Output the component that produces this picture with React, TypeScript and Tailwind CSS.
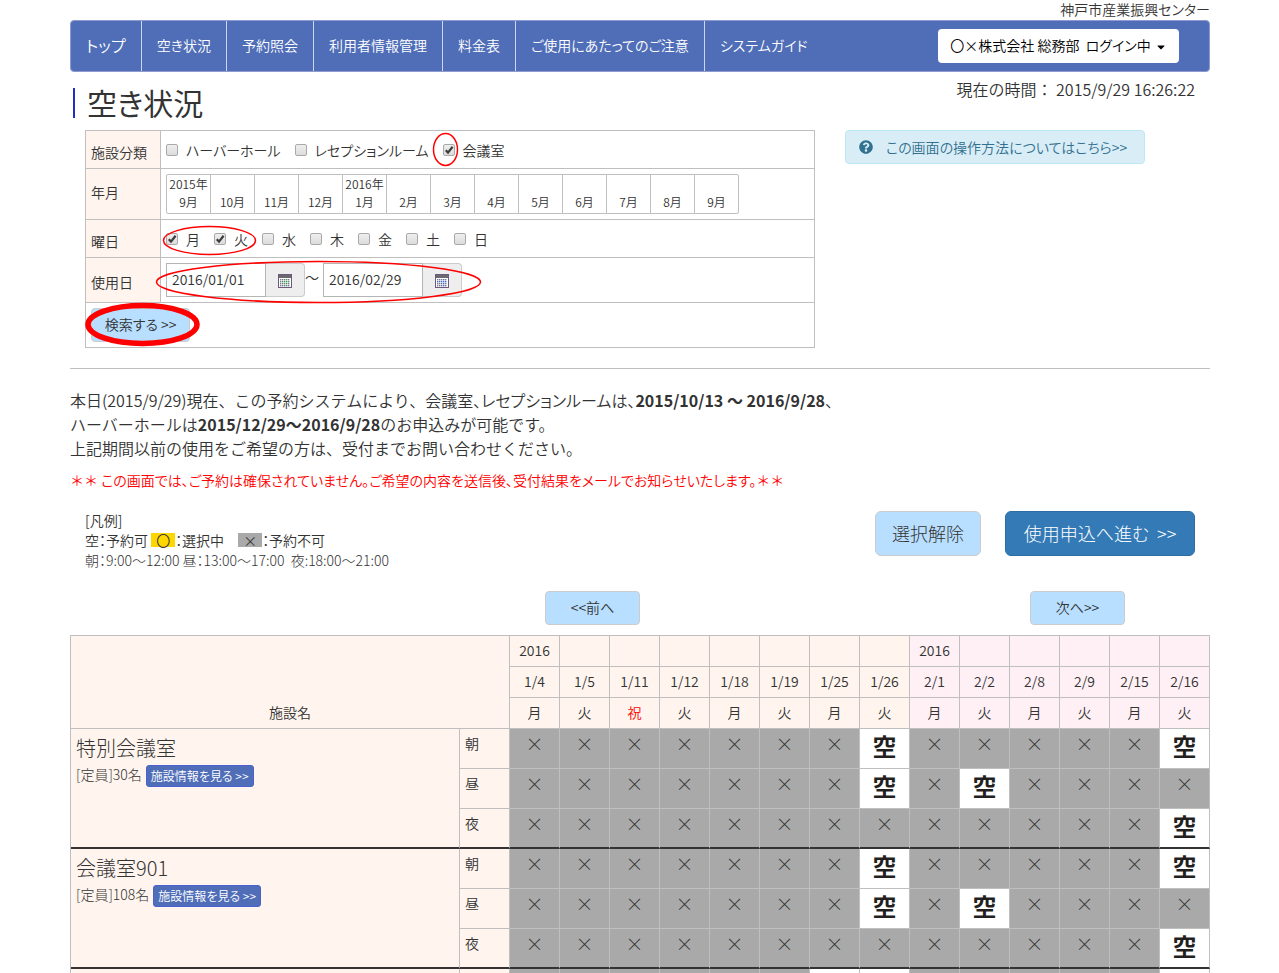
import React from "react";
import { FaQuestionCircle, FaCaretDown } from "react-icons/fa";

const navItems = [
  "空き状況",
  "予約照会",
  "利用者情報管理",
  "料金表",
  "ご使用にあたってのご注意",
  "システムガイド",
];

const facilities = [
  { name: "ハーバーホール", on: false },
  { name: "レセプションルーム", on: false },
  { name: "会議室", on: true },
];

const weekdays = [
  { name: "月", on: true },
  { name: "火", on: true },
  { name: "水", on: false },
  { name: "木", on: false },
  { name: "金", on: false },
  { name: "土", on: false },
  { name: "日", on: false },
];

const months = [
  { year: "2015年", month: "9月" },
  { year: "", month: "10月" },
  { year: "", month: "11月" },
  { year: "", month: "12月" },
  { year: "2016年", month: "1月" },
  { year: "", month: "2月" },
  { year: "", month: "3月" },
  { year: "", month: "4月" },
  { year: "", month: "5月" },
  { year: "", month: "6月" },
  { year: "", month: "7月" },
  { year: "", month: "8月" },
  { year: "", month: "9月" },
];

const days = [
  { year: "2016", date: "1/4", day: "月" },
  { year: "", date: "1/5", day: "火" },
  { year: "", date: "1/11", day: "祝" },
  { year: "", date: "1/12", day: "火" },
  { year: "", date: "1/18", day: "月" },
  { year: "", date: "1/19", day: "火" },
  { year: "", date: "1/25", day: "月" },
  { year: "", date: "1/26", day: "火" },
  { year: "2016", date: "2/1", day: "月" },
  { year: "", date: "2/2", day: "火" },
  { year: "", date: "2/8", day: "月" },
  { year: "", date: "2/9", day: "火" },
  { year: "", date: "2/15", day: "月" },
  { year: "", date: "2/16", day: "火" },
];

const rooms = [
  { name: "特別会議室", capacity: "30名", open: [[7, 13], [7, 9], [13]] },
  { name: "会議室901", capacity: "108名", open: [[7, 13], [7, 9], [13]] },
];

const slots = ["朝", "昼", "夜"];

const nextRoomOpen = [6, 7, 13];

function headTint(date: string) {
  return date.startsWith("2/") ? "bg-[#fff0f5]" : "bg-[#fff5ee]";
}

function Check({ name, on }: { name: string; on: boolean }) {
  return (
    <label className="flex items-center gap-2">
      <span className="relative flex">
        <input
          type="checkbox"
          defaultChecked={on}
          className="peer size-3 appearance-none rounded-xs border border-[#a9a9a9] bg-linear-to-b from-[#eeeeee] to-[#dcdcdc]"
        />
        <svg
          viewBox="0 0 12 12"
          className="pointer-events-none absolute inset-0 hidden size-3 peer-checked:block"
        >
          <path d="M2.8 6.2 5 8.6 9.6 2.8" fill="none" stroke="#3c3c3c" strokeWidth="2.2" />
        </svg>
      </span>
      {name}
    </label>
  );
}

function CalendarIcon({ tint }: { tint: string }) {
  return (
    <svg viewBox="0 0 14 14" className="size-[14px]">
      <rect x="0.5" y="0.5" width="13" height="13" fill="#fff" stroke="#6b5a7b" />
      <rect x="1" y="1" width="12" height="3" fill="#6a6a6e" />
      {[5, 7, 9, 11].map((y) =>
        [2, 4, 6, 8, 10].map((x) => (
          <rect
            key={`${x}-${y}`}
            x={x}
            y={y}
            width="1.4"
            height="1.4"
            fill={y === 7 || x === 8 ? tint : "#77778a"}
          />
        )),
      )}
    </svg>
  );
}

function DateField({ value, label, tint }: { value: string; label: string; tint: string }) {
  return (
    <div className="flex h-[34px]">
      <input
        type="text"
        defaultValue={value}
        aria-label={label}
        className="w-[100px] border border-[#b5b5b5] bg-white px-[5px] pb-[2px] text-sm text-[#333]"
      />
      <button
        type="button"
        aria-label={`${label}カレンダー`}
        className="flex w-[39px] items-center justify-center rounded-r border border-l-0 border-[#cccccc] bg-[#eeeeee] pt-[2px]"
      >
        <CalendarIcon tint={tint} />
      </button>
    </div>
  );
}

function SearchRow({
  label,
  height,
  labelPad,
  children,
}: {
  label: string;
  height: string;
  labelPad: string;
  children: React.ReactNode;
}) {
  return (
    <tr className={height}>
      <th
        scope="row"
        className={`w-[75px] border-r border-b border-[#bfbfbf] bg-[#fff5ee] px-[5px] text-left font-[350] ${labelPad}`}
      >
        {label}
      </th>
      <td className="border-r border-b border-[#bfbfbf] px-[5px]">{children}</td>
    </tr>
  );
}

function SearchForm() {
  return (
    <form className="relative">
      <table className="w-full border-separate border-spacing-0 border-t border-l border-[#bfbfbf]">
        <tbody>
          <SearchRow label="施設分類" height="h-[38px]" labelPad="pt-1">
            <div className="flex gap-[14px]">
              {facilities.map((f) => (
                <Check key={f.name} name={f.name} on={f.on} />
              ))}
            </div>
          </SearchRow>
          <SearchRow label="年月" height="h-[51px]" labelPad="pb-1">
            <div className="flex">
              {months.map((m, i) => (
                <button
                  type="button"
                  key={i}
                  className="-mr-px flex h-10 w-[45px] flex-col items-center justify-end border border-[#bfbfbf] pb-[2px] text-xs leading-[18px] first:rounded-l-xs last:rounded-r-xs"
                >
                  <span>{m.year}</span>
                  <span>{m.month}</span>
                </button>
              ))}
            </div>
          </SearchRow>
          <SearchRow label="曜日" height="h-[38px]" labelPad="pt-1">
            <div className="flex gap-[14px]">
              {weekdays.map((d) => (
                <Check key={d.name} name={d.name} on={d.on} />
              ))}
            </div>
          </SearchRow>
          <SearchRow label="使用日" height="h-[45px]" labelPad="pt-1">
            <div className="flex">
              <DateField value="2016/01/01" label="開始日" tint="#3f9a5a" />
              <span className="w-[18px] pt-1">～</span>
              <DateField value="2016/02/29" label="終了日" tint="#4a6bd0" />
            </div>
          </SearchRow>
          <tr className="h-[45px]">
            <td colSpan={2} className="border-r border-b border-[#bfbfbf] px-[5px]">
              <button
                type="submit"
                className="flex h-[34px] w-[99px] items-center justify-center rounded border border-[#cccccc] bg-[#b8dfff] pb-[2px]"
              >
                検索する &gt;&gt;
              </button>
            </td>
          </tr>
        </tbody>
      </table>
      <svg
        viewBox="0 0 420 220"
        className="pointer-events-none absolute top-0 left-0 h-[220px] w-[420px] overflow-visible"
        fill="none"
        stroke="#f00"
      >
        <ellipse cx="360.5" cy="19.5" rx="12" ry="16" strokeWidth="1.5" />
        <ellipse cx="124.5" cy="110.5" rx="46" ry="14" strokeWidth="1.5" />
        <ellipse cx="233.5" cy="152" rx="162" ry="20.5" strokeWidth="1.5" />
        <ellipse cx="57.5" cy="194.5" rx="54.5" ry="19" strokeWidth="5.5" />
      </svg>
    </form>
  );
}

function AvailabilityTable() {
  return (
    <table className="w-full table-fixed border-separate border-spacing-0 border-t border-l border-[#bfbfbf]">
      <colgroup>
        <col />
        <col className="w-[50px]" />
        {days.map((d) => (
          <col key={d.date} className="w-[50px]" />
        ))}
      </colgroup>
      <thead>
        <tr className="h-[31px]">
          <th
            rowSpan={3}
            colSpan={2}
            className="border-r border-b border-[#bfbfbf] bg-[#fff5ee] pb-[6px] align-bottom font-[350]"
          >
            施設名
          </th>
          {days.map((d) => (
            <th
              key={d.date}
              className={`border-r border-b border-[#bfbfbf] pb-[2px] font-[350] ${headTint(d.date)}`}
            >
              {d.year}
            </th>
          ))}
        </tr>
        <tr className="h-[31px]">
          {days.map((d) => (
            <th
              key={d.date}
              className={`border-r border-b border-[#bfbfbf] pb-[2px] font-[350] ${headTint(d.date)}`}
            >
              {d.date}
            </th>
          ))}
        </tr>
        <tr className="h-[31px]">
          {days.map((d) => (
            <th
              key={d.date}
              className={`border-r border-b border-[#bfbfbf] pb-[2px] font-[350] ${headTint(d.date)} ${
                d.day === "祝" ? "text-[#f00]" : ""
              }`}
            >
              {d.day}
            </th>
          ))}
        </tr>
      </thead>
      <tbody>
        {rooms.map((room) =>
          slots.map((slot, s) => {
            const edge = s === 2 ? "border-b-2 border-b-[#333]" : "border-b border-b-[#bfbfbf]";
            return (
              <tr key={room.name + slot} className="h-10">
                {s === 0 && (
                  <th
                    scope="rowgroup"
                    rowSpan={3}
                    className="border-r border-b-2 border-r-[#bfbfbf] border-b-[#333] bg-[#fff5ee] px-[5px] pt-[7px] text-left align-top font-[350]"
                  >
                    <div className="text-xl leading-6 font-light">{room.name}</div>
                    <div className="mt-[5px] flex items-start gap-1">
                      <span className="leading-[18px] font-light">[定員]{room.capacity}</span>
                      <button
                        type="button"
                        className="h-[22px] rounded-[3px] border border-[#4a5fd0] bg-[#4f6eb7] px-1 text-xs leading-5 text-white"
                      >
                        施設情報を見る &gt;&gt;
                      </button>
                    </div>
                  </th>
                )}
                <th
                  scope="row"
                  className={`border-r border-r-[#bfbfbf] bg-[#fff5ee] px-[5px] pt-1 text-left align-top font-[350] ${edge}`}
                >
                  {slot}
                </th>
                {days.map((d, i) =>
                  room.open[s].includes(i) ? (
                    <td
                      key={d.date}
                      className={`border-r border-r-[#bfbfbf] bg-white pt-px text-center align-top text-2xl leading-8 font-bold text-[#231f20] ${edge}`}
                    >
                      空
                    </td>
                  ) : (
                    <td
                      key={d.date}
                      className={`border-r border-r-[#bfbfbf] bg-[#a9a9a9] pt-1 text-center align-top text-lg leading-5 font-light ${edge}`}
                    >
                      ×
                    </td>
                  ),
                )}
              </tr>
            );
          }),
        )}
        <tr className="h-1">
          <td className="border-r border-[#bfbfbf] bg-[#fff5ee]" />
          <td className="border-r border-[#bfbfbf] bg-[#fff5ee]" />
          {days.map((d, i) => (
            <td
              key={d.date}
              className={`border-r border-[#bfbfbf] ${nextRoomOpen.includes(i) ? "bg-white" : "bg-[#a9a9a9]"}`}
            />
          ))}
        </tr>
      </tbody>
    </table>
  );
}

export default function App() {
  return (
    <div className="mx-auto max-w-[1141px] pl-px font-['Noto_Sans_CJK_JP',sans-serif] text-sm leading-5 font-[350] text-[#333] [font-feature-settings:'palt']">
      <p className="h-5 text-right leading-[18px]">神戸市産業振興センター</p>

      <nav className="flex h-[52px] items-center justify-between rounded border border-[#8f9bd0] bg-[#4f6eb7] pr-[30px] text-white">
        <ul className="flex h-full">
          <li className="flex border-r border-[#ccd4f0]">
            <a href="#" className="flex items-center px-[15px] pb-[2px] text-base">
              トップ
            </a>
          </li>
          {navItems.map((item) => (
            <li key={item} className="flex border-r border-[#ccd4f0] last:border-r-0">
              <a href="#" className="flex items-center px-[15px] pb-[2px] whitespace-nowrap">
                {item}
              </a>
            </li>
          ))}
        </ul>
        <button
          type="button"
          className="flex h-[34px] w-[241px] items-center justify-center gap-1 rounded bg-white pb-[2px] whitespace-pre text-black"
        >
          〇×株式会社 総務部&nbsp; ログイン中
          <FaCaretDown className="mt-1 size-3" />
        </button>
      </nav>

      <header className="flex h-[58px] items-start justify-between pr-[15px] pl-[3px]">
        <h1 className="mt-4 border-l-2 border-[#1f2fc0] pb-[2px] pl-3 text-[30px] leading-[28px] font-normal">
          空き状況
        </h1>
        <p className="mt-[5px] text-base leading-6 [font-feature-settings:normal]">
          現在の時間：&nbsp;2015/9/29 16:26:22
        </p>
      </header>

      <div className="flex">
        <section className="w-2/3 px-[15px]">
          <SearchForm />
        </section>
        <aside className="w-1/3 px-[15px]">
          <a
            href="#"
            className="flex h-[34px] w-[300px] items-center gap-[13px] rounded border border-[#bce8f1] bg-[#d9edf7] px-[13px] text-[#31708f]"
          >
            <FaQuestionCircle className="size-[14px]" />
            この画面の操作方法についてはこちら&gt;&gt;
          </a>
        </aside>
      </div>

      <hr className="mt-5 border-[#bfbfbf]" />

      <p className="mt-[19px] text-base leading-6 [font-feature-settings:normal]">
        本日(2015/9/29)現在、この予約システムにより、
        <span className="[font-feature-settings:'palt']">会議室、レセプションルームは、</span>
        <strong>2015/10/13 ～ 2016/9/28</strong>、<br />
        ハーバーホールは<strong>2015/12/29～2016/9/28</strong>のお申込みが可能です。
        <br />
        上記期間以前の使用をご希望の方は、受付までお問い合わせください。
      </p>
      <p className="mt-[10px] text-[#f00]">
        <span className="[font-feature-settings:normal]">＊＊</span>{" "}
        この画面では、ご予約は確保されていません。ご希望の内容を送信後、受付結果をメールでお知らせいたします。
        <span className="[font-feature-settings:normal]">＊＊</span>
      </p>

      <div className="mt-5 flex justify-between px-[15px]">
        <div>
          <p>[凡例]</p>
          <p>
            空：予約可{" "}
            <span className="inline-block h-[14px] w-6 bg-[#ffd700] text-center leading-[14px]">
              〇
            </span>
            ：選択中
            <span className="ml-[14px] inline-block h-[14px] w-6 bg-[#a9a9a9] text-center leading-[14px]">
              ×
            </span>
            ：予約不可
          </p>
          <p className="font-light">朝：9:00～12:00 昼：13:00～17:00&nbsp; 夜:18:00～21:00</p>
        </div>
        <div className="flex gap-6 pt-px">
          <button
            type="button"
            className="h-[45px] w-[106px] rounded-md border border-[#cccccc] bg-[#b8dfff] pb-[2px] text-lg font-light"
          >
            選択解除
          </button>
          <button
            type="button"
            className="h-[45px] w-[190px] rounded-md border border-[#2e6da4] bg-[#337ab7] pb-[2px] text-lg font-light text-white"
          >
            使用申込へ進む&nbsp; &gt;&gt;
          </button>
        </div>
      </div>

      <div className="mt-[21px] mb-[10px] flex justify-end gap-[390px] pr-[85px]">
        <button
          type="button"
          className="h-[34px] w-[95px] rounded border border-[#cccccc] bg-[#b8dfff] pb-[2px]"
        >
          &lt;&lt;前へ
        </button>
        <button
          type="button"
          className="h-[34px] w-[95px] rounded border border-[#cccccc] bg-[#b8dfff] pb-[2px]"
        >
          次へ&gt;&gt;
        </button>
      </div>

      <AvailabilityTable />
    </div>
  );
}
